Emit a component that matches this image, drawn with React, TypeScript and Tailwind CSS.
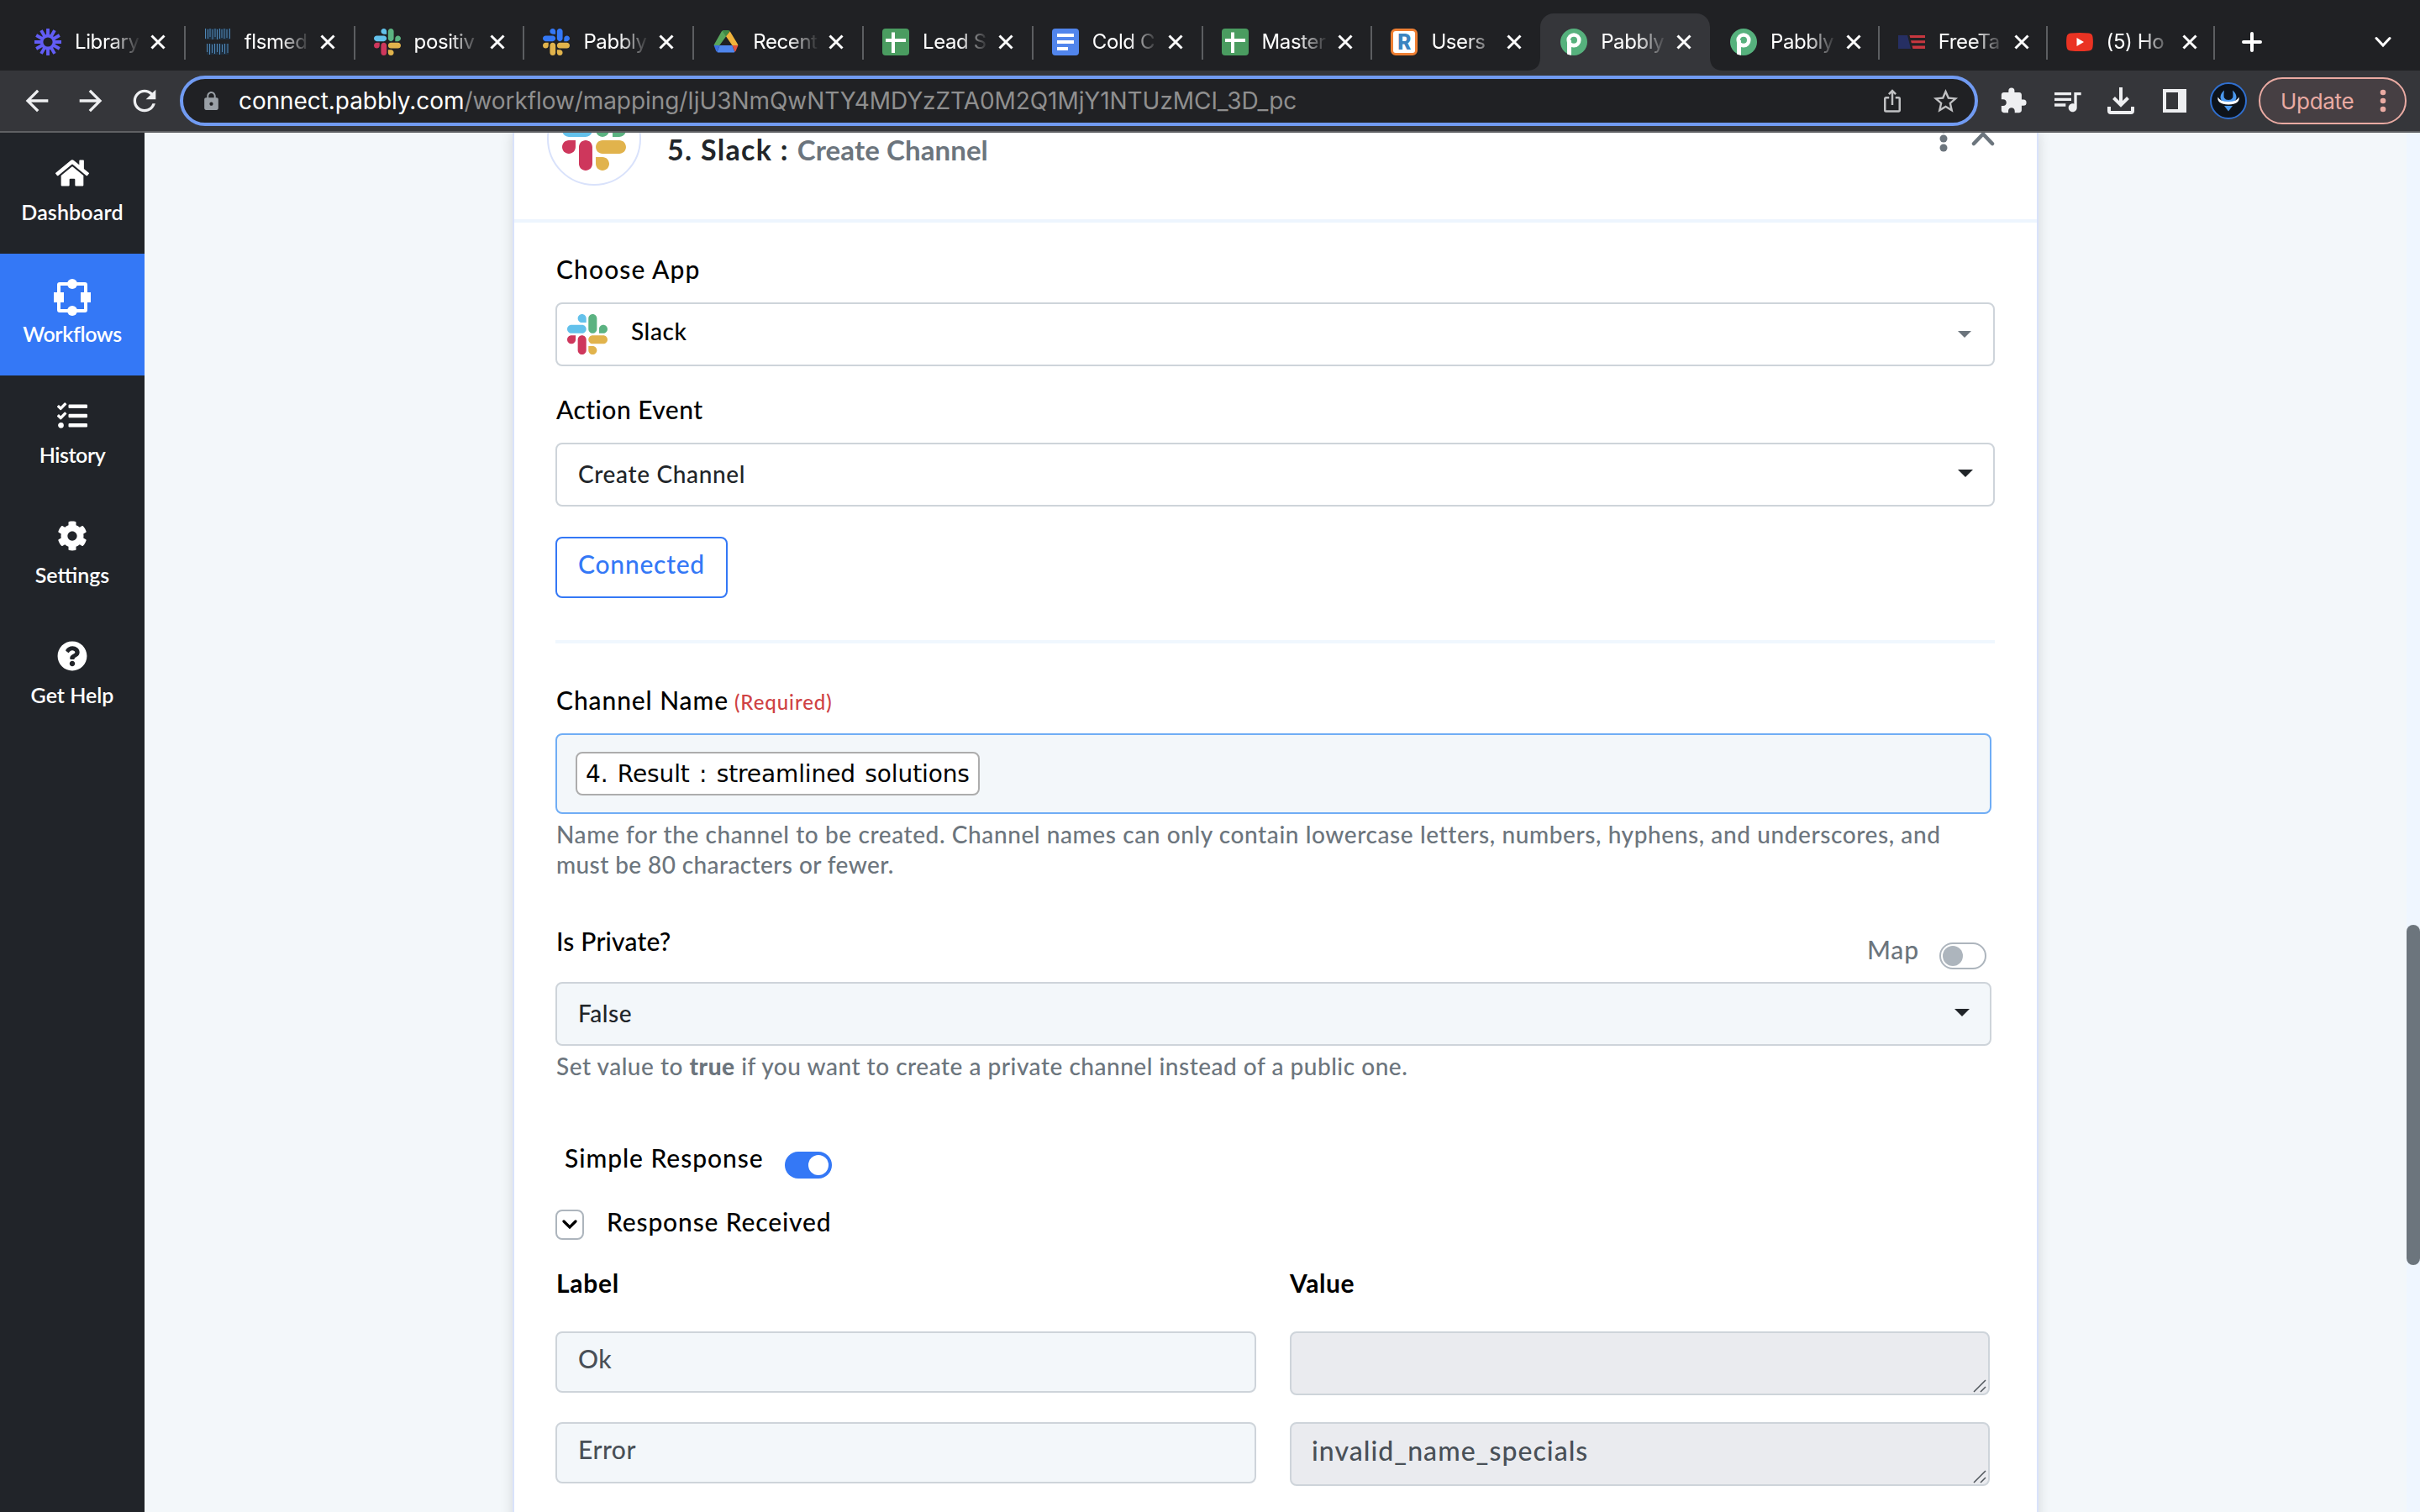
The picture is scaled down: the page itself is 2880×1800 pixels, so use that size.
import type { ReactNode } from "react";
import { FaCog, FaHome, FaQuestionCircle, FaTasks } from "react-icons/fa";
import {
  MdArrowBack,
  MdArrowForward,
  MdExtension,
  MdIosShare,
  MdLock,
  MdQueueMusic,
  MdRefresh,
  MdStarBorder,
} from "react-icons/md";

/* ---------- logos ---------- */

function SlackLogo({ className, blueTop = false }: { className: string; blueTop?: boolean }) {
  const left = blueTop ? "#3478f6" : "#63c1eb";
  const right = blueTop ? "#3478f6" : "#5bb281";
  const bottom = blueTop ? "#e1b34c" : "#ce375c";
  return (
    <svg viewBox="0 0 122.8 122.8" className={className}>
      <path fill={bottom} d="M25.8 77.6c0 7.1-5.8 12.9-12.9 12.9S0 84.7 0 77.6s5.8-12.9 12.9-12.9h12.9v12.9zM32.3 77.6c0-7.1 5.8-12.9 12.9-12.9s12.9 5.8 12.9 12.9v32.3c0 7.1-5.8 12.9-12.9 12.9s-12.9-5.8-12.9-12.9V77.6z" />
      <path fill={left} d="M45.2 25.8c-7.1 0-12.9-5.8-12.9-12.9S38.1 0 45.2 0s12.9 5.8 12.9 12.9v12.9H45.2zM45.2 32.3c7.1 0 12.9 5.8 12.9 12.9s-5.8 12.9-12.9 12.9H12.9C5.8 58.1 0 52.3 0 45.2s5.8-12.9 12.9-12.9h32.3z" />
      <path fill={right} d="M97 45.2c0-7.1 5.8-12.9 12.9-12.9s12.9 5.8 12.9 12.9-5.8 12.9-12.9 12.9H97V45.2zM90.5 45.2c0 7.1-5.8 12.9-12.9 12.9s-12.9-5.8-12.9-12.9V12.9C64.7 5.8 70.5 0 77.6 0s12.9 5.8 12.9 12.9v32.3z" />
      <path fill="#e1b34c" d="M77.6 97c7.1 0 12.9 5.8 12.9 12.9s-5.8 12.9-12.9 12.9-12.9-5.8-12.9-12.9V97h12.9zM77.6 90.5c-7.1 0-12.9-5.8-12.9-12.9s5.8-12.9 12.9-12.9h32.3c7.1 0 12.9 5.8 12.9 12.9s-5.8 12.9-12.9 12.9H77.6z" />
    </svg>
  );
}

function LoomLogo() {
  return (
    <svg viewBox="0 0 32 32" className="size-8" stroke="#625df5" fill="none">
      <circle cx="16" cy="16" r="7.4" strokeWidth="3.6" />
      {[0, 30, 60, 90, 120, 150].map((a) => (
        <path key={a} d="M16 0v8.5M16 23.5V32" strokeWidth="3.8" transform={`rotate(${a} 16 16)`} />
      ))}
    </svg>
  );
}

function StreamlinedLogo() {
  return (
    <svg viewBox="0 0 32 32" className="size-8">
      <rect x="1" y="0" width="30" height="13" fill="#1f2f3f" />
      <rect x="3" y="18" width="26" height="13" fill="#1f2f3f" />
      <g stroke="#4f86b5" strokeWidth="1">
        <path d="M1.5 0v12M4.5 1v11M7 0v10M10 1v12M13 0v10M15.5 1v12M18.5 0v12M21 1v10M24 0v12M27 1v10M30.5 0v12" />
        <path d="M3.5 18v10M6.5 18v13M9.5 19v10M12.5 18v12M15.5 18v10M18.5 18v13M21.5 19v9M24.5 18v12M28 18v11" />
      </g>
    </svg>
  );
}

function DriveLogo() {
  return (
    <svg viewBox="0 0 32 32" className="size-8">
      <path fill="#58a55c" d="M10.7 3.6Q12 2 14 2l3 0-1 7.5L8.3 20H1.6Q2 18.500 3 17z" />
      <path fill="#3f8a45" d="M11.500 2.800Q12 2 14 2h4q2 0 2.700 1L16 9.500z" />
      <path fill="#f1b43c" d="M20.700 3.200 29 17q1 1.500 1.400 3h-7L16 9.300z" />
      <path fill="#3b6fe0" d="M1.600 20h7L5.400 27.800q-1-.5-1.400-1.500z" />
      <path fill="#e0523f" d="M23.400 20h7l-2.600 6.200q-.5 1-1.400 1.600z" />
      <path fill="#5086ec" d="M8.600 20h14.800l3 8q-.6.500-2 .5H7.500q-1.300 0-2.100-.600z" />
    </svg>
  );
}

function SheetsLogo() {
  return (
    <svg viewBox="0 0 32 32" className="size-8">
      <rect width="32" height="32" rx="4" fill="#4a9c60" />
      <path d="M4 14h24M13 4.500v24.500" stroke="#fff" strokeWidth="4" />
    </svg>
  );
}

function DocsLogo() {
  return (
    <svg viewBox="0 0 32 32" className="size-8">
      <rect width="32" height="32" rx="4" fill="#5185ec" />
      <path d="M6 8h20M6 16h20M6 24h13" stroke="#fff" strokeWidth="4" />
    </svg>
  );
}

function UsersLogo() {
  return (
    <span className="flex size-8 items-center justify-center rounded-[6px] border-[3px] border-[#ee7f33] bg-white font-['Roboto',sans-serif] text-[25px] leading-none font-black text-[#3b84c0]">
      R
    </span>
  );
}

function PabblyLogo() {
  return (
    <svg viewBox="0 0 32 32" className="size-8">
      <circle cx="16" cy="16" r="16" fill="#56b17d" />
      <path d="M8 30.500V24l5 0v7.800Q10 31.500 8 30.500z" fill="#fff" />
      <path d="M10.500 28V14" stroke="#fff" strokeWidth="5" />
      <circle cx="16" cy="13.800" r="6.300" stroke="#fff" strokeWidth="4.600" fill="none" />
    </svg>
  );
}

function TaxLogo() {
  return (
    <svg viewBox="0 0 32 32" className="size-8">
      <path d="M0 8h11l4 16H0z" fill="#262f63" />
      <path d="M13.500 8H32v3H14.300zM15 14.300h17v3H15.800zM16.500 20.600H32v3.400H17.400z" fill="#c7373f" />
    </svg>
  );
}

function YouTubeLogo() {
  return (
    <svg viewBox="0 0 32 32" className="size-8">
      <path d="M5 5.500Q16 4.300 27 5.500q4 .4 4.500 4.500.8 6 0 12-.5 4-4.500 4.500-11 1.200-22 0Q1 26 .5 22q-.8-6 0-12Q1 6 5 5.500z" fill="#ea3323" />
      <path d="M12.500 11v10l8.500-5z" fill="#fff" />
    </svg>
  );
}

/* ---------- browser chrome ---------- */

type Tab = { title: string; icon: ReactNode; active?: boolean; sep?: boolean; narrow?: boolean };

const tabs: Tab[] = [
  { title: "Library", icon: <LoomLogo /> },
  { title: "flsmed", icon: <StreamlinedLogo />, sep: true },
  { title: "positiv", icon: <SlackLogo className="size-8" />, sep: true },
  { title: "Pabbly", icon: <SlackLogo className="size-8" blueTop />, sep: true },
  { title: "Recent", icon: <DriveLogo />, sep: true },
  { title: "Lead S", icon: <SheetsLogo />, sep: true },
  { title: "Cold C", icon: <DocsLogo />, sep: true },
  { title: "Master", icon: <SheetsLogo />, sep: true },
  { title: "Users", icon: <UsersLogo />, sep: true },
  { title: "Pabbly", icon: <PabblyLogo />, active: true },
  { title: "Pabbly", icon: <PabblyLogo />, narrow: true },
  { title: "FreeTa", icon: <TaxLogo />, sep: true, narrow: true },
  { title: "(5) Ho", icon: <YouTubeLogo />, sep: true, narrow: true },
];

function TabFlare({ className }: { className: string }) {
  return (
    <svg viewBox="0 0 16 16" className={className}>
      <path d="M16 0v16H0Q16 16 16 0z" fill="#35363a" />
    </svg>
  );
}

function BrowserTab({ tab }: { tab: Tab }) {
  return (
    <div
      className={`relative flex h-[68px] shrink-0 items-center ${tab.narrow ? "w-[199.8px]" : "w-[201.8px]"} ${
        tab.active ? "rounded-t-[16px] bg-[#35363a]" : ""
      }`}
    >
      {tab.active && (
        <>
          <TabFlare className="absolute bottom-0 -left-4 size-4" />
          <TabFlare className="absolute -right-4 bottom-0 size-4 -scale-x-100" />
        </>
      )}
      <span className={`mb-[-2px] h-10 w-0.5 ${tab.sep ? "bg-[#5c5e61]" : ""}`} />
      <span className="ml-[22px] shrink-0">{tab.icon}</span>
      <span className="ml-4 w-[77px] overflow-hidden text-[24px] leading-8 tracking-[-0.4px] whitespace-nowrap text-white [mask-image:linear-gradient(to_right,#000_55%,transparent_102%)]">
        {tab.title}
      </span>
      <svg viewBox="0 0 18 18" className="ml-[13px] size-[18px] shrink-0" stroke="#fff" strokeWidth="3">
        <path d="M1.500 1.500l15 15M16.500 1.500l-15 15" />
      </svg>
    </div>
  );
}

function BrowserChrome() {
  return (
    <header className="shrink-0 font-['Inter',sans-serif]">
      <div className="flex h-[84px] items-end bg-[#202124] pl-[17px]">
        {tabs.map((t, i) => (
          <BrowserTab key={i} tab={t} />
        ))}
        <div className="flex h-[68px] flex-1 items-center">
          <span className="mb-[-2px] h-10 w-0.5 bg-[#5c5e61]" />
          <svg viewBox="0 0 24 24" className="ml-8 size-6" stroke="#fff" strokeWidth="4" strokeLinecap="round">
            <path d="M12 2v20M2 12h20" />
          </svg>
          <svg viewBox="0 0 20 14" className="mr-[34px] ml-auto h-[14px] w-5" stroke="#fff" strokeWidth="3" fill="none" strokeLinecap="round">
            <path d="M2 2.500l8 8.500 8-8.500" />
          </svg>
        </div>
      </div>
      <div className="flex h-[74px] items-center border-b-2 border-[#5f6063] bg-[#35363a] pl-6 text-[#eeeff1]">
        <MdArrowBack className="size-10" />
        <MdArrowForward className="ml-6 size-10" />
        <MdRefresh className="ml-6 size-10" />
        <div className="ml-[22px] flex h-[60px] w-[2140px] items-center rounded-full border-4 border-[#719bf2] bg-[#202124] pr-[17px] pl-[21px]">
          <MdLock className="size-[25px] text-[#9aa0a6]" />
          <span className="ml-5 text-[28px] leading-9 tracking-[-0.07px] text-white">
            connect.pabbly.com
            <span className="text-[#8f8f8f]">/workflow/mapping/IjU3NmQwNTY4MDYzZTA0M2Q1MjY1NTUzMCI_3D_pc</span>
          </span>
          <MdIosShare className="ml-auto size-[30px] text-[#c0c1c3]" />
          <MdStarBorder className="ml-[31px] size-[35px] text-[#c0c1c3]" />
        </div>
        <MdExtension className="ml-[25px] size-[34px]" />
        <MdQueueMusic className="ml-[27px] size-10" />
        <svg viewBox="0 0 32 32" className="ml-7 size-8" fill="none" stroke="currentColor" strokeWidth="4">
          <path d="M16 0v19M7.500 12.500l8.500 8.500 8.500-8.500" />
          <path d="M2 23v5q0 2 2 2h24q2 0 2-2v-5" />
        </svg>
        <svg viewBox="0 0 28 28" className="ml-[34px] size-7" fill="none" stroke="currentColor">
          <path d="M2 2h24v24H2z" strokeWidth="4" />
          <path d="M22 2v24" strokeWidth="8" />
        </svg>
        <svg viewBox="0 0 44 44" className="ml-7 size-11">
          <circle cx="22" cy="22" r="21" fill="#0d131b" stroke="#2f6fd0" strokeWidth="2" />
          <path d="M17 9.500q-5 4.500-4.500 9 1 4.500 6 6h7q5-1.500 6-6 .5-4.500-4.500-9 1 7 0 9-1.500 2.500-5 2.500t-5-2.500q-1-2 0-9z" fill="#4a98ee" />
          <path d="M17 28h10l-5 6.500z" fill="#4a98ee" />
          <path d="M9.500 17.500q2.500 5.500 12.500 5.500t12.500-5.500q1.500 8.500-12.500 9-14-.5-12.500-9z" fill="#fff" />
        </svg>
        <div className="ml-[14px] flex h-14 w-[176px] items-center rounded-full border-2 border-[#eaaba3] bg-[#463f43] pl-6 text-[#eaaba3]">
          <span className="pt-px text-[26px] leading-8 tracking-[-0.3px]">Update</span>
          <svg viewBox="0 0 8 28" className="ml-[31px] h-7 w-2" fill="currentColor">
            <circle cx="4" cy="4" r="3.300" />
            <circle cx="4" cy="14" r="3.300" />
            <circle cx="4" cy="24" r="3.300" />
          </svg>
        </div>
      </div>
    </header>
  );
}

/* ---------- app sidebar ---------- */

function WorkflowIcon() {
  return (
    <svg viewBox="0 0 44 44" className="size-11 translate-y-1" fill="currentColor">
      <rect x="6" y="6" width="32" height="32" rx="1" fill="none" stroke="currentColor" strokeWidth="4" />
      <rect x="0" y="16" width="12" height="12" />
      <rect x="32" y="16" width="12" height="12" />
      <circle cx="22" cy="6" r="6" />
      <circle cx="22" cy="38" r="6" />
    </svg>
  );
}

const navItems = [
  { label: "Dashboard", box: "h-[144px]", text: "tracking-[0.15px]", icon: <FaHome className="h-9 w-10" /> },
  { label: "Workflows", box: "h-[145px] bg-[#3478f6]", text: "mt-px tracking-[-0.35px]", icon: <WorkflowIcon /> },
  { label: "History", box: "h-[143px]", text: "tracking-[-0.45px]", icon: <FaTasks className="size-9" /> },
  { label: "Settings", box: "h-[143px]", text: "", icon: <FaCog className="size-9" /> },
  { label: "Get Help", box: "h-[143px]", text: "", icon: <FaQuestionCircle className="size-9" /> },
];

function Sidebar() {
  return (
    <nav className="flex w-[172px] shrink-0 flex-col bg-[#212429]">
      {navItems.map((n) => (
        <a key={n.label} className={`flex flex-col items-center pt-[26px] text-white ${n.box}`}>
          <span className="mb-[9px] flex h-11 items-center">{n.icon}</span>
          <span className={`text-[25px] leading-[30px] font-semibold ${n.text}`}>{n.label}</span>
        </a>
      ))}
    </nav>
  );
}

/* ---------- workflow step form ---------- */

function Caret({ className }: { className: string }) {
  return (
    <svg viewBox="0 0 18 9" className={className} fill="currentColor">
      <path d="M0 0h18l-9 9z" />
    </svg>
  );
}

function FieldLabel({ children, className }: { children: ReactNode; className: string }) {
  return (
    <label className={`block h-9 pl-px text-[30px] leading-9 font-medium whitespace-nowrap text-black ${className}`}>{children}</label>
  );
}

function StepHeader() {
  return (
    <div className="flex h-[107px] items-start overflow-hidden border-b-4 border-[#edf5fe] pr-[50px] pl-[39px]">
      <div className="-mt-[49px] flex size-28 shrink-0 items-center justify-center rounded-full border-2 border-[#d9e2fb] bg-white">
        <SlackLogo className="size-[76px]" />
      </div>
      <h2 className="ml-[31px] flex items-baseline gap-[10px] leading-10 whitespace-nowrap">
        <span className="text-[34px] font-bold tracking-[1.3px] text-[#212529]">5. Slack :</span>
        <span className="text-[33px] font-bold tracking-[0.1px] text-[#6c757d]">Create Channel</span>
      </h2>
      <svg viewBox="0 0 10 32" className="mt-[-9px] ml-auto h-8 w-[10px] text-[#6c757d]" fill="currentColor">
        <circle cx="5" cy="5" r="4.500" />
        <circle cx="5" cy="16" r="4.500" />
        <circle cx="5" cy="27" r="4.500" />
      </svg>
      <svg viewBox="0 0 28 18" className="mt-[-2px] ml-7 h-[18px] w-7" fill="none" stroke="#6c757d" strokeWidth="4.500" strokeLinecap="round">
        <path d="M3 15L14 3.500 25 15" />
      </svg>
    </div>
  );
}

function ResizeGrip() {
  return (
    <svg viewBox="0 0 16 16" className="absolute right-[2px] bottom-[1px] size-4" stroke="#50555b" strokeWidth="1.500">
      <path d="M1 15L15 1M9 15l6-6" />
    </svg>
  );
}

function ResponseRow({ label, value }: { label: string; value: string }) {
  return (
    <div className="flex items-start gap-10">
      <div className="flex h-[73px] w-[834px] items-center rounded-lg border-2 border-[#ced4da] bg-[#f3f7fa] pb-2 pl-[25px] text-[30px] tracking-[0.5px] text-[#495057]">
        {label}
      </div>
      <div className="relative flex h-[76px] w-[833px] items-center rounded-lg border-2 border-[#ced4da] bg-[#eaebef] pb-2 pl-6 text-[32px] tracking-[1.05px] text-[#495057]">
        {value}
        <ResizeGrip />
      </div>
    </div>
  );
}

function StepForm() {
  return (
    <div className="flex flex-col items-start pt-[37px] pr-[50px] pl-[49px] font-medium">
      <FieldLabel className="tracking-[1.1px]">Choose App</FieldLabel>
      <div className="mt-[22px] flex h-[76px] w-[1713px] items-center rounded-lg border-2 border-[#ced4da] bg-white pr-[26px] pl-3">
        <SlackLogo className="size-12" />
        <span className="ml-7 pb-2 text-[28px] tracking-[0.6px] text-black">Slack</span>
        <Caret className="ml-auto h-2 w-4 text-[#6c757d]" />
      </div>

      <FieldLabel className="mt-[33px] tracking-[0.45px]">Action Event</FieldLabel>
      <div className="mt-[22px] flex h-[76px] w-[1713px] items-center rounded-lg border-2 border-[#ced4da] bg-white pr-6 pl-[25px]">
        <span className="pb-0.5 text-[28px] tracking-[0.65px] text-[#212529]">Create Channel</span>
        <Caret className="mb-1 ml-auto h-[9px] w-[18px] text-[#212529]" />
      </div>

      <button className="mt-9 flex h-[73px] w-[205px] items-center justify-center rounded-lg border-2 border-[#3478f6] pb-2 text-[30px] tracking-[0.75px] text-[#3478f6]">
        Connected
      </button>

      <div className="mt-[50px] h-1 w-[1713px] bg-[#f0f7fe]" />

      <FieldLabel className="mt-[49px] tracking-[0.9px]">
        Channel Name
        <span className="ml-[7px] text-[24px] tracking-[0.95px] text-[#cf4244]">(Required)</span>
      </FieldLabel>
      <div className="mt-[22px] flex h-24 w-[1709px] items-center rounded-lg border-2 border-[#70adf5] bg-[#f3f7fa] pl-[22px]">
        <span className="flex h-[52px] items-center rounded-lg border-2 border-[#adadad] bg-white px-[10px] pt-0.5 font-['DejaVu_Sans',sans-serif] text-[28px] font-normal tracking-[-0.1px] text-black [word-spacing:2.5px]">
          4. Result : streamlined solutions
        </span>
      </div>
      <p className="mt-1.5 pl-px text-[28px] leading-9 tracking-[0.59px] whitespace-nowrap text-[#6c757d]">
        Name for the channel to be created. Channel names can only contain lowercase letters, numbers, hyphens, and underscores, and
        <br />
        <span className="tracking-[0.4px]">must be 80 characters or fewer.</span>
      </p>

      <div className="mt-[55px] flex h-[67px] w-[1709px] items-start">
        <FieldLabel className="tracking-[0.2px]">Is Private?</FieldLabel>
        <span className="mt-[10px] ml-auto text-[30px] leading-9 tracking-[0.9px] text-[#6c757d]">Map</span>
        <span className="mt-5 mr-1.5 ml-[24px] flex h-8 w-14 items-center rounded-full border-2 border-[#adb5bd] bg-white pl-0.5">
          <span className="size-6 rounded-full bg-[#adb5bd]" />
        </span>
      </div>
      <div className="flex h-[76px] w-[1709px] items-center rounded-lg border-2 border-[#ced4da] bg-[#f3f7fa] pr-6 pl-[25px]">
        <span className="pb-0.5 text-[28px] tracking-[0.5px] text-[#212529]">False</span>
        <Caret className="mb-1 ml-auto h-[9px] w-[18px] text-[#212529]" />
      </div>
      <p className="mt-1.5 pl-px text-[28px] leading-9 tracking-[0.51px] whitespace-nowrap text-[#6c757d]">
        Set value to <b className="font-black">true</b> if you want to create a private channel instead of a public one.
      </p>

      <div className="mt-[73px] flex h-11 items-start pl-[10px]">
        <FieldLabel className="tracking-[0.95px]">Simple Response</FieldLabel>
        <span className="mt-[11px] ml-[25px] flex h-8 w-14 items-center justify-end rounded-full bg-[#3478f6] pr-1">
          <span className="size-6 rounded-full bg-white" />
        </span>
      </div>

      <div className="mt-8 flex h-10 items-start">
        <span className="mt-1 flex h-9 w-[34px] items-center justify-center rounded-lg border-2 border-[#adb5bd] bg-white">
          <svg viewBox="0 0 20 12" className="h-3 w-5" fill="none" stroke="#000" strokeWidth="3.200" strokeLinecap="round">
            <path d="M3 2l7 7 7-7" />
          </svg>
        </span>
        <FieldLabel className="ml-[26px] tracking-[0.85px]">Response Received</FieldLabel>
      </div>

      <div className="mt-[33px] flex gap-10 pl-px text-[30px] leading-9 font-bold text-black">
        <span className="w-[833px] tracking-[0.7px]">Label</span>
        <span className="tracking-[0.6px]">Value</span>
      </div>
      <div className="mt-10 flex flex-col gap-8">
        <ResponseRow label="Ok" value="" />
        <ResponseRow label="Error" value="invalid_name_specials" />
      </div>
    </div>
  );
}

export default function App() {
  return (
    <div className="flex h-[1800px] w-[2880px] flex-col overflow-hidden font-['Lato',sans-serif]">
      <BrowserChrome />
      <div className="flex min-h-0 flex-1">
        <Sidebar />
        <main className="flex flex-1 overflow-hidden bg-[#f3f7fa] pl-[438px]">
          <section className="h-[1700px] w-[1816px] shrink-0 border-x-2 border-[#d9e2fb] bg-white shadow-[0_0_14px_rgba(0,0,0,0.13)]">
            <StepHeader />
            <StepForm />
          </section>
        </main>
        <div className="w-4 shrink-0 bg-[#eff6ff] pt-[943px]">
          <div className="h-[405px] w-4 rounded-full bg-[#6c757d]" />
        </div>
      </div>
    </div>
  );
}
